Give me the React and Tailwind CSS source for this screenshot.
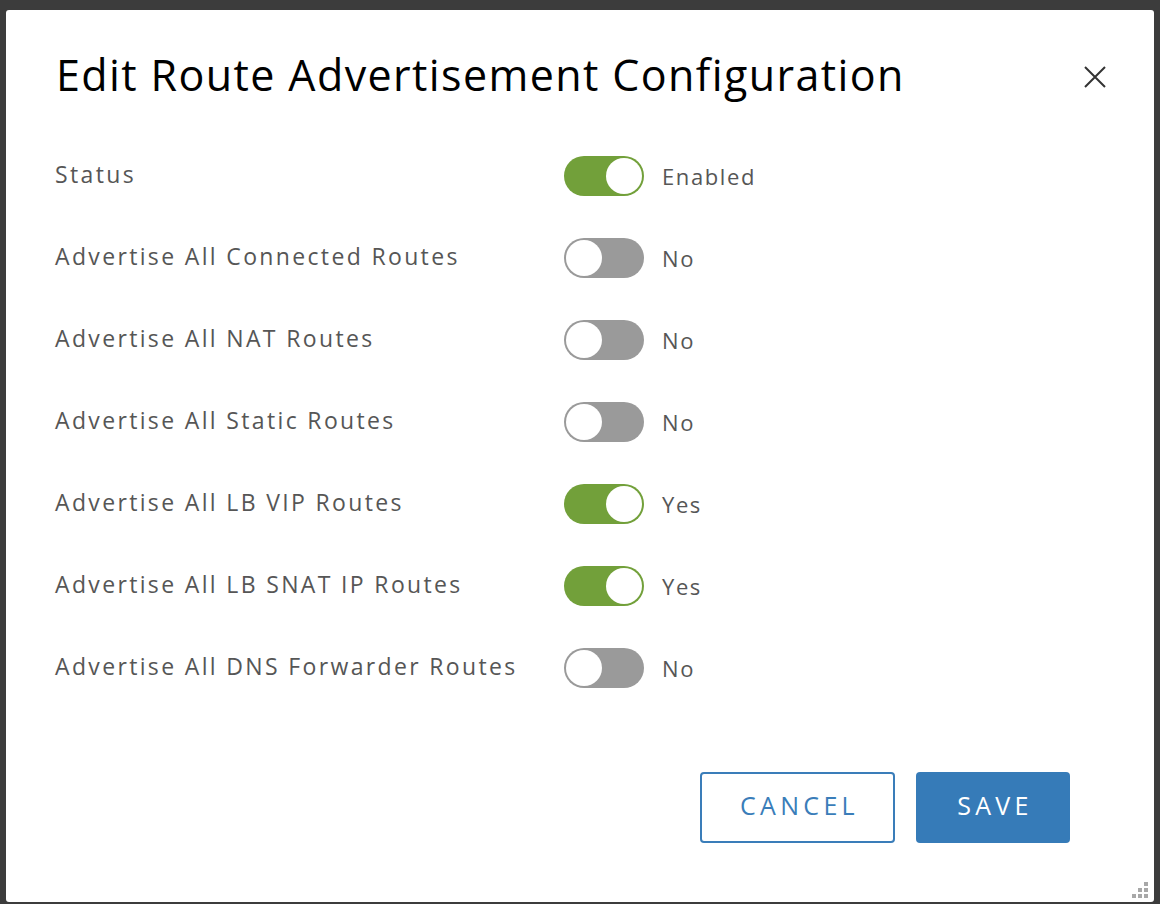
import React from "react";

const rows = [
  { label: "Status", on: true, value: "Enabled" },
  { label: "Advertise All Connected Routes", on: false, value: "No" },
  { label: "Advertise All NAT Routes", on: false, value: "No" },
  { label: "Advertise All Static Routes", on: false, value: "No" },
  { label: "Advertise All LB VIP Routes", on: true, value: "Yes" },
  { label: "Advertise All LB SNAT IP Routes", on: true, value: "Yes" },
  { label: "Advertise All DNS Forwarder Routes", on: false, value: "No" },
];

function Toggle({ on }) {
  return (
    <div
      className={
        "w-[80px] h-[40px] rounded-full flex items-center p-[2px] " +
        (on ? "bg-[#72a03a] justify-end" : "bg-[#9a9a9a] justify-start")
      }
    >
      <div className="w-[36px] h-[36px] rounded-full bg-white" />
    </div>
  );
}

export default function App() {
  return (
    <div
      className="w-[1160px] h-[904px] bg-[#3c3c3c] pt-[10px] pl-[6px] overflow-hidden"
      style={{ fontFamily: '"Open Sans", "Liberation Sans", sans-serif' }}
    >
      <div className="relative w-[1148px] h-[892px] bg-white rounded-[3px] flex flex-col">
        <div className="flex items-center justify-between pl-[50px] pr-[48px] pt-[43px]">
          <h1 className="text-[43px] leading-[44px] tracking-[1.4px] text-black font-normal whitespace-nowrap">
            Edit Route Advertisement Configuration
          </h1>
          <svg width="22" height="22" viewBox="0 0 22 22" className="mt-[4px]">
            <path d="M1 1 L21 21 M21 1 L1 21" stroke="#333" strokeWidth="2" />
          </svg>
        </div>
        <div className="flex flex-col pl-[49px] mt-[38px]">
          {rows.map((r) => (
            <div key={r.label} className="flex items-center h-[82px]">
              <div className="w-[509px] text-[23px] tracking-[2.35px] text-[#565656] -mt-[4px] whitespace-nowrap">
                {r.label}
              </div>
              <Toggle on={r.on} />
              <div className="ml-[18px] text-[22px] tracking-[1.6px] text-[#565656]">{r.value}</div>
            </div>
          ))}
        </div>
        <div className="flex justify-end gap-[21px] pr-[84px] mt-[63px]">
          <button className="w-[195px] h-[71px] rounded-[4px] border-2 border-[#3a7db9] text-[#3a7db9] text-[25px] tracking-[4.3px] bg-white pb-[4px] pl-[4px]">
            CANCEL
          </button>
          <button className="w-[154px] h-[71px] rounded-[4px] bg-[#367bb8] text-white text-[25px] tracking-[4.3px] pb-[4px] pl-[4px]">
            SAVE
          </button>
        </div>
        <svg width="20" height="20" viewBox="0 0 20 20" className="absolute right-[4px] bottom-[2px]">
          <rect x="14" y="2" width="4" height="4" fill="#a8a8a8" />
          <rect x="8" y="8" width="4" height="4" fill="#a8a8a8" />
          <rect x="14" y="8" width="4" height="4" fill="#a8a8a8" />
          <rect x="2" y="14" width="4" height="4" fill="#a8a8a8" />
          <rect x="8" y="14" width="4" height="4" fill="#a8a8a8" />
          <rect x="14" y="14" width="4" height="4" fill="#a8a8a8" />
        </svg>
      </div>
    </div>
  );
}
